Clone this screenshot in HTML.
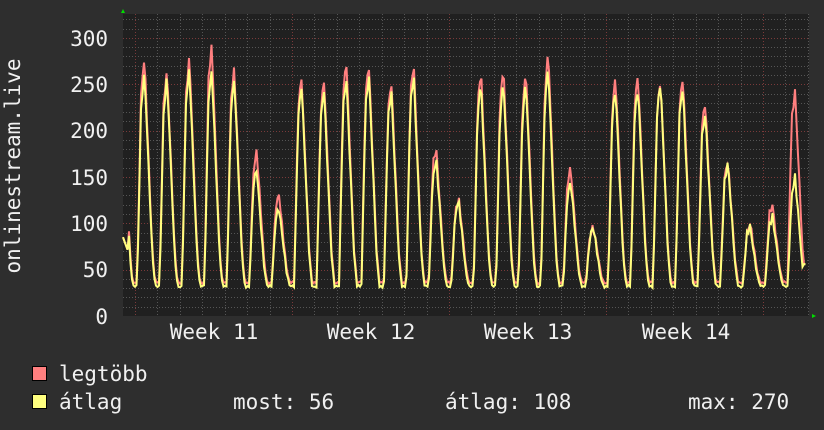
<!DOCTYPE html>
<html><head><meta charset="utf-8">
<style>
html,body{margin:0;padding:0;background:#2e2e2e;}
svg{display:block;}
text{font-family:"DejaVu Sans Mono","Liberation Mono",monospace;fill:#f0f0f0;}
</style></head>
<body>
<svg id="g" width="824" height="430" xmlns="http://www.w3.org/2000/svg">
<rect width="824" height="430" fill="#2e2e2e"/>
<rect x="123" y="14" width="686" height="302" fill="#202020"/>
<g id="grid"></g>
<g id="data"></g>
<text x="108" y="46" font-size="21" text-anchor="end">300</text>
<text x="108" y="92" font-size="21" text-anchor="end">250</text>
<text x="108" y="138" font-size="21" text-anchor="end">200</text>
<text x="108" y="185" font-size="21" text-anchor="end">150</text>
<text x="108" y="231" font-size="21" text-anchor="end">100</text>
<text x="108" y="277" font-size="21" text-anchor="end">50</text>
<text x="108" y="324" font-size="21" text-anchor="end">0</text>
<text transform="translate(20,166) rotate(-90)" font-size="21" text-anchor="middle">onlinestream.live</text>
<text x="214" y="339" font-size="21" text-anchor="middle">Week 11</text>
<text x="371" y="339" font-size="21" text-anchor="middle">Week 12</text>
<text x="528" y="339" font-size="21" text-anchor="middle">Week 13</text>
<text x="686" y="339" font-size="21" text-anchor="middle">Week 14</text>
<polygon points="121,13 125,13 123,9" fill="#00dd00"/>
<polygon points="812,314 812,318 816,316" fill="#00dd00"/>
<rect x="32.5" y="366.5" width="14" height="14" fill="#ff7f7f" stroke="#000"/>
<rect x="32.5" y="394.5" width="14" height="14" fill="#ffff7f" stroke="#000"/>
<text x="59" y="381" font-size="21">legtöbb</text>
<text x="59" y="409" font-size="21">átlag</text>
<text x="233" y="409" font-size="21">most: 56</text>
<text x="445" y="409" font-size="21">átlag: 108</text>
<text x="688" y="409" font-size="21">max: 270</text>
</svg>
<script>
var NS="http://www.w3.org/2000/svg";
var grid=document.getElementById('grid'),data=document.getElementById('data');
function line(x1,y1,x2,y2,c,p){var l=document.createElementNS(NS,'line');l.setAttribute('x1',x1);l.setAttribute('y1',y1);l.setAttribute('x2',x2);l.setAttribute('y2',y2);l.setAttribute('stroke',c);l.setAttribute('stroke-width',1);l.setAttribute('stroke-dasharray','1,2');p.appendChild(l);}
var k=0.927;
for(var v=10;v<=320;v+=10){var y=Math.round(316-v*k)+0.5;line(123,y,809,y,(v%50==0)?'#7a3a3a':'#555',grid);}
for(var i=0;i<31;i++){var x=Math.round(135+i*22.43)+0.5;if(x>809)break;line(x,14,x,316,((i%7)==0)?'#7a3a3a':'#555',grid);}
var ya=[265,257,265,268,257,157,118,250,242,258,262,242,262,172,123,252,255,250,268,148,95,245,250,253,247,222,165,95,110,150];
var ra=[280,268,278,292,270,177,130,260,254,273,275,254,272,185,128,263,270,265,283,162,98,256,262,256,257,232,170,98,120,245];
function shape(ph){
 if(ph<0.15) return 0.0; if(ph<0.33) return (ph-0.15)/0.18*0.85;
 if(ph<0.48) return 0.85+(ph-0.33)/0.15*0.15; if(ph<0.58) return 1-(ph-0.48)*2.5;
 if(ph<0.82) return 0.75-(ph-0.58)/0.24*0.6; if(ph<0.95) return 0.15-(ph-0.82)/0.13*0.15; return 0.0;}
function build(arr,base,col,off){
 var pts=[];
 for(var x=123;x<=806;x+=1.5){
  var d=(x-145)/22.43+0.5;var di=Math.floor(d);var ph=d-di;
  if(di<0){di=0;} if(di>=arr.length)di=arr.length-1;
  var pk=arr[di];var s=shape(ph);
  var jit=Math.sin(x*1.7+off)*3+Math.sin(x*0.37+off)*2;
  var val=base+(pk-base)*s+jit*(0.3+s);
  if(x<128) val=85-(x-123)*3;
  if(x>803) val=56;
  pts.push(x.toFixed(1)+','+(316-val*k).toFixed(1));
 }
 var p=document.createElementNS(NS,'polyline');p.setAttribute('points',pts.join(' '));p.setAttribute('fill','none');p.setAttribute('stroke',col);p.setAttribute('stroke-width','2');data.appendChild(p);}
build(ra,36,'#ff7f7f',0);
build(ya,32,'#ffff7f',1.3);
</script>
</body></html>
